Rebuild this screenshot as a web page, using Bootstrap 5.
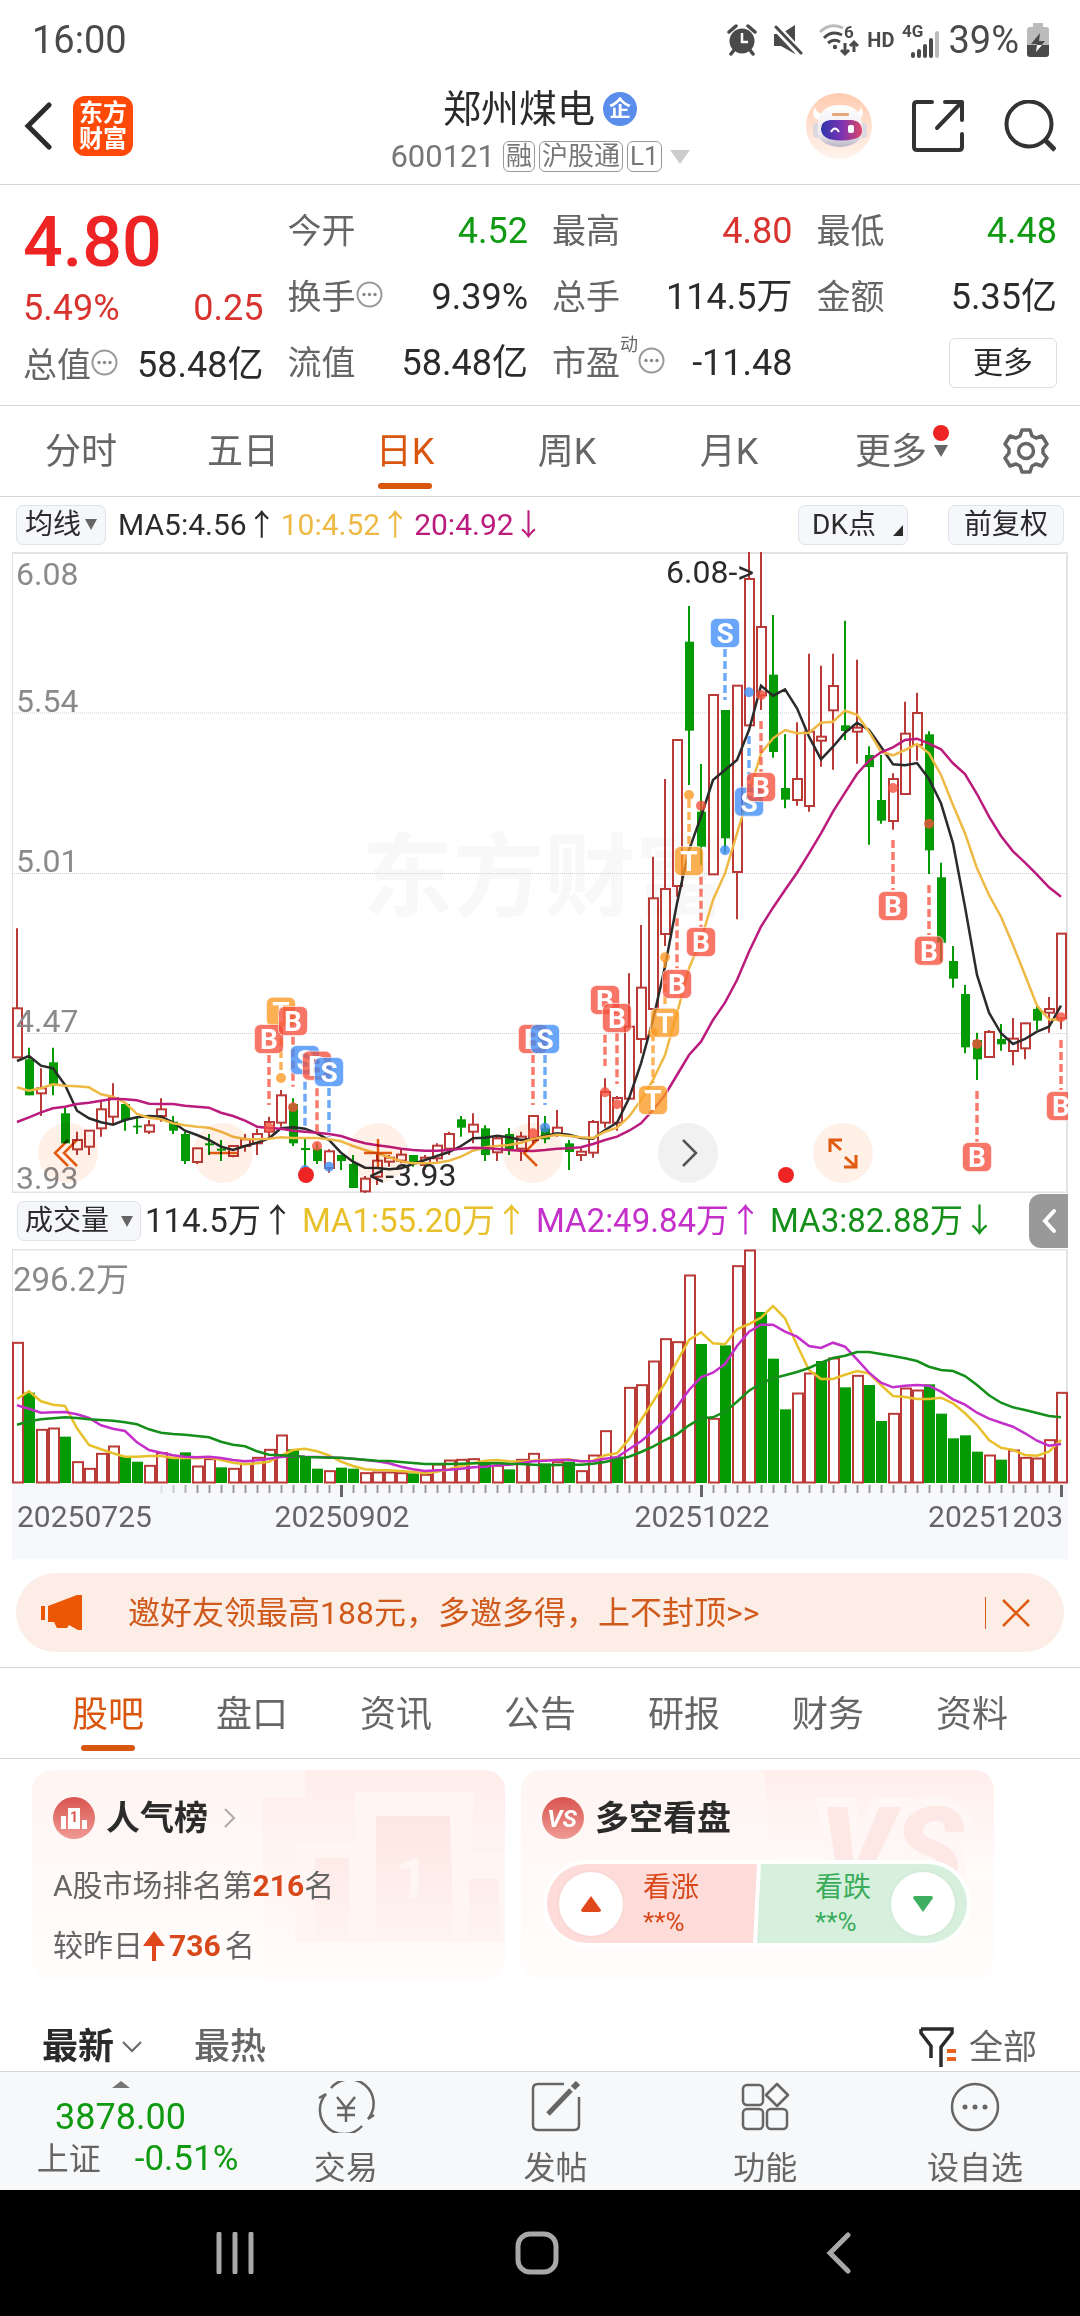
<!DOCTYPE html>
<html lang="zh-CN">
<head>
<meta charset="utf-8">
<meta name="viewport" content="width=device-width, initial-scale=1">
<title>郑州煤电 600121</title>
<link href="https://cdn.jsdelivr.net/npm/bootstrap@5.3.0/dist/css/bootstrap.min.css" rel="stylesheet">
<style>
:root{--ink:#2b2b2b;--soft:#666;--up:#d9332f;--down:#0f9a12;--brand:#d9560f;--rule:#d6d6d8}
body{font-family:Roboto,"Noto Sans CJK SC",sans-serif;color:var(--ink);background:#fff;font-size:36px;line-height:44px}
button,a{color:inherit;text-decoration:none}
button{background:none;border:0;padding:0}
svg{display:block;flex:none}
dl,dd,dt,h1,h2,p{margin:0;font-weight:400}
.ruled{border-bottom:1px solid var(--rule)}
.statusbar{height:80px;padding:0 31px 0 32px;color:#4a4a4a;font-size:38px}
.hd{font-size:20px}
.topbar{height:105px;padding:0 24px}
.topbar .side{flex:1 1 0;padding-bottom:12px}
.topbar .ident{padding-bottom:4px}
.logo{width:60px;height:60px;border-radius:12px;background:#ff4a07;color:#fff;font-size:24px;line-height:26px;font-weight:700;margin-left:21px}
.stock-name{font-size:38px;line-height:44px}
.ent{width:34px;height:34px;border-radius:50%;background:#5b8dea;color:#fff;font-size:22px;line-height:34px;font-weight:700;text-align:center}
.code{font-size:31px;line-height:34px;color:#777;margin-top:9px}
.tagbox{border:1px solid #999;border-radius:6px;font-size:26px;line-height:29px;padding:0 2px;color:#777}
.quote{padding:24px 23px 0;gap:0 24px}
.quote .col-q{flex:1 1 0}
.quote dl{height:66px}
.quote dl:last-child{height:62px}
.quote dt{color:var(--soft);font-size:34px;display:flex;align-items:center;height:44px}
.quote dt svg{margin-bottom:6px}
.quote .last{font-size:70px;line-height:66px;height:66px;font-weight:500;color:#ee2424}
.quote .change{height:68px;line-height:66px}
.quote sup{font-size:18px;line-height:20px;top:-18px}
.up{color:var(--up)}.down{color:var(--down)}
.more-line{height:44px}
.more-btn{border:1px solid #ddd;border-radius:6px;width:108px;height:50px;font-size:30px;line-height:46px}
.tabitem{color:var(--soft);height:90px;line-height:92px;position:relative}
.periods{height:91px}
.tabitem.on{color:var(--brand)}
.tabitem.on::after{content:"";position:absolute;left:50%;bottom:7px;width:54px;height:6px;margin-left:-27px;border-radius:3px;background:var(--brand)}
.tabitem .caret{position:absolute;left:124px;top:39px}
.tabitem .reddot{left:123px;top:19px}
.gear{width:108px}
.tools{height:55px;padding:0 16px;font-size:30px}
.chip{border:1px solid #dfe2e8;border-radius:7px;background:#f5f7fb;height:40px;line-height:36px;font-size:28px}
.avg{color:#eeb945}.mag{color:#ba1b7c}
.plot{padding:0 12px;position:relative}
.plot svg.chart{width:100%;height:auto}
.floaters{position:absolute;left:38px;bottom:10px;gap:95px}
.floaters button{width:60px;height:60px;border-radius:50%;background:#fff0e8;mix-blend-mode:multiply}
.floaters .neutral{background:#f1f1f1}
.reddot{position:absolute;width:16px;height:16px;border-radius:50%;background:#ee2424}
.floaters .reddot{top:44px;left:260px}
.floaters .reddot + .reddot{left:740px}
.volbar{height:56px;padding:0 12px 0 17px;font-size:33px}
.fold{width:39px;height:54px;border-radius:12px 0 0 12px;background:#999}
.promo{margin:14px 16px 15px;height:79px;border-radius:40px;background:#fceee6;color:#d05a1c;font-size:32px;padding:0 34px 0 25px}
.promo .bar{width:1px;height:32px;background:#d05a1c}
.sections{height:92px;padding:0 36px;border-top:1px solid var(--rule)}
.sections .tabitem{line-height:94px}
.cards{padding:11px 86px 0 32px;gap:16px}
.tile{flex:1 1 0;height:210px;border-radius:20px;background:linear-gradient(#fff5f3,#fffdfc);position:relative;overflow:hidden;padding:24px 21px}
.tile .deco{position:absolute;right:0;top:0}
.tile h2{font-size:34px;line-height:48px;font-weight:700;margin-left:11px}
.tile p{font-size:30px;line-height:60px;color:var(--soft);position:relative}
.tile .rank{margin-top:14px}
.tile b{color:#d8481b}
.vote{position:absolute;left:22px;right:23px;top:90px;height:87px;border-radius:44px;border:4px solid #fff;background:#fff;overflow:hidden}
.vote button{flex:1 1 0;font-size:28px;line-height:36px;text-align:left;padding:0 12px}
.vote .bull{background:#fddcda;color:#d8481b;gap:20px;clip-path:polygon(0 0,100% 0,calc(100% - 4px) 100%,0 100%)}
.vote .bear{background:#d6f0dd;color:#3aac5c;gap:20px;clip-path:polygon(4px 0,100% 0,100% 100%,0 100%)}
.vote small{font-size:26px;line-height:32px;display:block}
.vote i{width:64px;height:64px;border-radius:50%;background:#fff;box-shadow:0 0 4px rgba(0,0,0,.06)}
.feed{height:91px;padding:45px 43px 0 42px}
.feed button{height:44px}
.feed .hot{color:#666;margin-left:52px}
.feed .filter{font-size:34px;color:#666}
.dock{height:119px;background:#f6f8fa;border-top:1px solid var(--rule);color:var(--soft);font-size:32px}
.dock .idx{width:241px;line-height:42px;padding:5px 0 0}
.dock .idx .pt{font-size:36px;line-height:42px}
.dock .idx .mkt{gap:34px;padding-left:34px}
.dock .idx .ch{font-size:35px}
.dock .act{flex:1 1 0;line-height:44px;padding-top:9px;gap:13px}
.sysnav{height:126px;background:#000;padding:0 90px 0 84px}
</style>
<script src="https://cdn.jsdelivr.net/npm/bootstrap@5.3.0/dist/js/bootstrap.bundle.min.js"></script>
</head>
<body>
<div class="statusbar d-flex align-items-center justify-content-between">
  <span>16:00</span>
  <div class="d-flex align-items-center">
    <svg width="30" height="32" viewBox="0 0 30 32"><circle cx="15" cy="17" r="12.500" fill="#4a4a4a"/><path d="M2 8 9 2M28 8 21 2M7 26l-3 4M23 26l3 4" stroke="#4a4a4a" stroke-width="3.500" stroke-linecap="round"/><path d="M15 9v9h6" fill="none" stroke="#fff" stroke-width="2.500"/></svg>
    <svg class="ms-3" width="30" height="32" viewBox="0 0 30 32"><path d="M1 10h7L22 1v29L8 22H1z" fill="#4a4a4a"/><path d="M0 0 30 32" stroke="#fff" stroke-width="8"/><path d="M3 3 28 29" stroke="#4a4a4a" stroke-width="3" stroke-linecap="round"/></svg>
    <svg class="ms-3" width="40" height="34" viewBox="0 0 40 34"><g fill="none" stroke="#4a4a4a" stroke-width="3"><path d="M1 9Q11-1 24 5" stroke="#bbb"/><path d="M5 15q8-8 18-3M9 20q6-5 12-1"/><path d="M26 20v11m-4-4 4 4 4-4M35 29V19m-4 4 4-4 4 4"/></g><circle cx="16" cy="24" r="2.200" fill="#4a4a4a"/><text x="25" y="15" font-size="17" font-weight="700" fill="#4a4a4a">6</text></svg>
    <span class="hd fw-bold ms-2">HD</span>
    <svg class="ms-2" width="38" height="38" viewBox="0 0 38 38"><text x="0" y="16" font-size="17" font-weight="700" fill="#4a4a4a">4G</text><path d="M11 35v-2M17 35V30M23 35V25M29 35V19" stroke="#4a4a4a" stroke-width="4" stroke-linecap="round"/><path d="M35 35V12" stroke="#bbb" stroke-width="4" stroke-linecap="round"/></svg>
    <span class="ms-2">39%</span>
    <svg class="ms-2" width="22" height="34" viewBox="0 0 22 34"><path d="M6 0h10v4h3q3 0 3 3v15H0V7q0-3 3-3h3z" fill="#bbb"/><path d="M0 22h22v9q0 3-3 3H3q-3 0-3-3z" fill="#4a4a4a"/><path d="m13 10-9 11h6l-1 8 9-11h-6z" fill="#4a4a4a"/><path d="m10 22-1 7 6-7z" fill="#fff"/></svg>
  </div>
</div>

<header class="topbar ruled d-flex align-items-center">
  <div class="side d-flex align-items-center">
    <button aria-label="返回"><svg width="28" height="48" viewBox="0 0 28 48"><path d="M25 3 4 24l21 21" fill="none" stroke="#2b2b2b" stroke-width="5" stroke-linecap="round"/></svg></button>
    <a href="#" class="logo d-flex flex-column justify-content-center align-items-center"><span>东方</span><span>财富</span></a>
  </div>
  <div class="ident">
    <h1 class="stock-name d-flex align-items-center justify-content-center gap-2">郑州煤电<span class="ent">企</span></h1>
    <div class="code d-flex align-items-center gap-1"><span class="me-1">600121</span><span class="tagbox">融</span><span class="tagbox">沪股通</span><span class="tagbox">L1</span><svg class="ms-1" width="20" height="14" viewBox="0 0 20 14"><path d="M0 0h20L10 14z" fill="#ccc"/></svg></div>
  </div>
  <div class="side d-flex align-items-center justify-content-end">
    <button aria-label="智能助手"><svg width="66" height="66" viewBox="0 0 66 66"><defs><linearGradient id="halo" x2="0" y2="1"><stop stop-color="#ffcbb0"/><stop offset="1" stop-color="#fff4ee"/></linearGradient><linearGradient id="visor"><stop stop-color="#2f35a8"/><stop offset=".5" stop-color="#7a33b4"/><stop offset="1" stop-color="#dc4766"/></linearGradient><linearGradient id="shell" x2="0" y2="1"><stop stop-color="#fff"/><stop offset=".7" stop-color="#ece8ee"/><stop offset="1" stop-color="#b9b4c4"/></linearGradient></defs><circle cx="33" cy="33" r="33" fill="url(#halo)"/><path d="M9 14q-5 9 3 13l6-6q-8 0-9-7zM55 14q5 9-3 13l-6-6q8 0 9-7z" fill="#fff"/><rect x="7" y="30" width="8" height="15" rx="4" fill="#dcd8e0"/><rect x="53" y="30" width="8" height="15" rx="4" fill="#dcd8e0"/><path d="M12 34Q12 12 34 12t22 22q2 8-3 13-7 7-19 7t-19-7q-5-5-3-13z" fill="url(#shell)"/><path d="M15 36q0-8 9-9h22q9 1 10 9t-8 10q-12 3-25 0-8-3-8-10z" fill="url(#visor)"/><path d="M25 39q4-7 8 0" fill="none" stroke="#fff" stroke-width="2"/><rect x="42" y="32" width="6" height="8" rx="2" fill="#fff"/><rect x="26" y="20" width="17" height="3" rx="1" fill="#e8a878"/></svg></button>
    <button class="ms-4 ps-3" aria-label="分享"><svg width="52" height="52" viewBox="0 0 52 52" fill="none" stroke="#333" stroke-width="4" stroke-linecap="round" stroke-linejoin="round"><path d="M20 2H5Q2 2 2 5v42q0 3 3 3h42q3 0 3-3V34M25 28 48 4M33 2h17v18"/></svg></button>
    <button class="ms-4 ps-3" aria-label="搜索"><svg width="52" height="52" viewBox="0 0 52 52" fill="none" stroke="#333" stroke-width="4"><circle cx="25" cy="24" r="22.500"/><path d="m41 40 10 10" stroke-width="5"/></svg></button>
  </div>
</header>

<section class="quote ruled d-flex">
  <div class="col-q">
    <div class="last">4.80</div>
    <div class="change d-flex justify-content-between up"><span>5.49%</span><span>0.25</span></div>
    <dl class="d-flex justify-content-between"><dt>总值<svg width="27" height="27" viewBox="0 0 27 27"><use href="#dots"/></svg></dt><dd>58.48亿</dd></dl>
  </div>
  <div class="col-q">
    <dl class="d-flex justify-content-between"><dt>今开</dt><dd class="down">4.52</dd></dl>
    <dl class="d-flex justify-content-between"><dt>换手<svg width="27" height="27" viewBox="0 0 27 27"><use href="#dots"/></svg></dt><dd>9.39%</dd></dl>
    <dl class="d-flex justify-content-between"><dt>流值</dt><dd>58.48亿</dd></dl>
  </div>
  <div class="col-q">
    <dl class="d-flex justify-content-between"><dt>最高</dt><dd class="up">4.80</dd></dl>
    <dl class="d-flex justify-content-between"><dt>总手</dt><dd>114.5万</dd></dl>
    <dl class="d-flex justify-content-between"><dt>市盈<sup>动</sup><svg width="27" height="27" viewBox="0 0 27 27"><use href="#dots"/></svg></dt><dd>-11.48</dd></dl>
  </div>
  <div class="col-q">
    <dl class="d-flex justify-content-between"><dt>最低</dt><dd class="down">4.48</dd></dl>
    <dl class="d-flex justify-content-between"><dt>金额</dt><dd>5.35亿</dd></dl>
    <div class="more-line d-flex justify-content-end align-items-center"><button class="more-btn">更多</button></div>
  </div>
</section>
<svg width="0" height="0" class="position-absolute"><defs><g id="dots"><circle cx="13.500" cy="13.500" r="12" fill="none" stroke="#999" stroke-width="2"/><g fill="#888"><circle cx="8" cy="13.500" r="1.700"/><circle cx="13.500" cy="13.500" r="1.700"/><circle cx="19" cy="13.500" r="1.700"/></g></g></defs></svg>

<nav class="periods ruled d-flex text-center">
  <a href="#" class="tabitem flex-fill w-100">分时</a>
  <a href="#" class="tabitem flex-fill w-100">五日</a>
  <a href="#" class="tabitem flex-fill w-100 on">日K</a>
  <a href="#" class="tabitem flex-fill w-100">周K</a>
  <a href="#" class="tabitem flex-fill w-100">月K</a>
  <a href="#" class="tabitem flex-fill w-100">更多<span class="reddot"></span><svg class="caret" width="14" height="12" viewBox="0 0 14 12"><path d="M0 0h14L7 12z" fill="#666"/></svg></a>
  <button class="gear flex-shrink-0 d-flex align-items-center justify-content-center" aria-label="设置"><svg width="46" height="46" viewBox="0 0 46 46" fill="none" stroke="#666" stroke-width="3.500" stroke-linejoin="round"><path d="M19 2h8l2 6 4 2 6-2 5 8-4 5v4l4 5-5 8-6-2-4 2-2 6h-8l-2-6-4-2-6 2-5-8 4-5v-4l-4-5 5-8 6 2 4-2z"/><circle cx="23" cy="23" r="7.500"/></svg></button>
</nav>

<div class="tools d-flex align-items-center">
  <button class="chip d-flex align-items-center justify-content-center" style="width:90px">均线<svg class="ms-1" width="12" height="11" viewBox="0 0 12 11"><path d="M0 0h12L6 11z" fill="#666"/></svg></button>
  <span class="ms-2 ps-1">MA5:4.56↑</span><span class="avg ms-1">10:4.52↑</span><span class="mag ms-1">20:4.92↓</span>
  <button class="chip ms-auto d-flex align-items-center justify-content-between" style="width:110px;padding:0 4px 0 13px">DK点<svg class="align-self-end mb-2" width="10" height="11" viewBox="0 0 10 11"><path d="M10 0v11H0z" fill="#2b2b2b"/></svg></button>
  <button class="chip" style="width:116px;margin-left:40px">前复权</button>
</div>

<div class="plot">
  <svg class="chart" id="price" viewBox="0 0 1056 641">
    <text x="350" y="357" font-size="91" font-weight="700" fill="#f8f8f8">东方财富</text>
    <g fill="none" stroke="#e3e3e5"><path d="M.5 0V641" /><path d="M0 1h1056M0 640.500h1056M1055 0V641" stroke-width="2"/><path d="M0 161h1056M0 321.500h1056M0 481.500h1056" stroke="#cfcfcf" stroke-dasharray="1 1"/></g>
    <g id="marks"></g>
    <g font-size="32" fill="#8a8a8a"><text x="4" y="33">6.08</text><text x="4" y="160">5.54</text><text x="4" y="320">5.01</text><text x="4" y="480">4.47</text><text x="4" y="637">3.93</text></g>
    <g font-size="32" fill="#2b2b2b"><text x="654" y="31">6.08-&gt;</text><text x="357" y="634">&lt;-3.93</text></g>
  </svg>
  <div class="floaters d-flex">
    <button aria-label="快退"><svg width="60" height="60" viewBox="0 0 60 60" fill="none" stroke="#e05a10" stroke-width="2.500"><path d="M30 17 17 30l13 13M39 17 26 30l13 13"/></svg></button>
    <button aria-label="缩小"><svg width="60" height="60" viewBox="0 0 60 60"><path d="M16 30h28" stroke="#e05a10" stroke-width="2.500"/></svg></button>
    <button aria-label="放大"><svg width="60" height="60" viewBox="0 0 60 60"><path d="M16 30h28M30 16v28" stroke="#e05a10" stroke-width="2.500"/></svg></button>
    <button aria-label="左移"><svg width="60" height="60" viewBox="0 0 60 60"><path d="M34 17 21 30l13 13" fill="none" stroke="#e05a10" stroke-width="2.500"/></svg></button>
    <button class="neutral" aria-label="右移"><svg width="60" height="60" viewBox="0 0 60 60"><path d="m25 17 13 13-13 13" fill="none" stroke="#555" stroke-width="2.500"/></svg></button>
    <button aria-label="全屏"><svg width="60" height="60" viewBox="0 0 60 60" fill="none" stroke="#e05a10" stroke-width="3"><path d="M17 29V17h12M18 18l10 9M43 32v12H31M42 43 32 34"/></svg></button>
    <span class="reddot"></span>
    <span class="reddot"></span>
  </div>
</div>

<div class="volbar d-flex align-items-center">
  <button class="chip d-flex align-items-center justify-content-center" style="width:124px">成交量<svg class="ms-2 ps-1" width="16" height="11" viewBox="0 0 12 11"><path d="M0 0h12L6 11z" fill="#666"/></svg></button>
  <span class="ms-1">114.5万↑</span>
  <span class="ms-2" style="color:#e8c02c">MA1:55.20万↑</span>
  <span class="ms-2" style="color:#c42fca">MA2:49.84万↑</span>
  <span class="ms-2" style="color:#14901a">MA3:82.88万↓</span>
  <button class="fold ms-auto d-flex align-items-center justify-content-center" aria-label="收起"><svg width="16" height="26" viewBox="0 0 16 26"><path d="M13 3 4 13l9 10" fill="none" stroke="#fff" stroke-width="4" stroke-linecap="round"/></svg></button>
</div>
<div class="plot">
  <svg class="chart" id="volume" viewBox="0 0 1056 310">
    <rect y="235" width="1056" height="75" fill="#f7f8fb"/>
    <g fill="none" stroke="#e3e3e5"><path d="M.5 0V234"/><path d="M0 .5h1056M1055 0V234" stroke-width="2"/></g>
    <g id="bars"></g>
    <text x="1" y="42" font-size="33" fill="#8a8a8a">296.2万</text>
    <g font-size="30" fill="#666"><text x="5" y="278">20250725</text><text x="330" y="278" text-anchor="middle">20250902</text><text x="690" y="278" text-anchor="middle">20251022</text><text x="1051" y="278" text-anchor="end">20251203</text></g>
  </svg>
</div>

<div class="promo d-flex align-items-center">
  <svg width="42" height="36" viewBox="0 0 42 36"><path d="M0 11h4v14H0zM7 11 36 0h5v35h-4l-9-5-2 3H16l-3-6H7z" fill="#ec5706"/></svg>
  <a href="#" style="margin-left:45px">邀好友领最高188元，多邀多得，上不封顶&gt;&gt;</a>
  <span class="bar ms-auto"></span>
  <button class="ms-3" aria-label="关闭"><svg width="28" height="28" viewBox="0 0 28 28"><path d="m1 1 26 26M27 1 1 27" stroke="#e05a10" stroke-width="2.500"/></svg></button>
</div>

<nav class="sections ruled d-flex text-center">
  <a href="#" class="tabitem flex-fill w-100 on">股吧</a><a href="#" class="tabitem flex-fill w-100">盘口</a><a href="#" class="tabitem flex-fill w-100">资讯</a><a href="#" class="tabitem flex-fill w-100">公告</a><a href="#" class="tabitem flex-fill w-100">研报</a><a href="#" class="tabitem flex-fill w-100">财务</a><a href="#" class="tabitem flex-fill w-100">资料</a>
</nav>

<div class="cards d-flex">
  <section class="tile">
    <svg class="deco" width="245" height="210" viewBox="0 0 245 210"><defs><linearGradient id="fade" x2="0" y2="1"><stop stop-color="#fbdcd8"/><stop offset="1" stop-color="#fff3f0"/></linearGradient><linearGradient id="veil" x2="0" y2="1"><stop stop-color="#ffeeeb"/><stop offset="1" stop-color="#fffcfb"/></linearGradient></defs><path d="M45 0h200v210H3V28h42z" fill="url(#veil)"/><path d="M35 72h60V22h118v60h32v90H35z" fill="#fff6f4"/><path d="M55 88h34v84H55zM116 46h74l4 126h-78zM209 109h29l4 63h-33z" fill="url(#fade)" opacity=".6"/><text x="136" y="128" font-size="56" font-weight="700" fill="#fff6f4">1</text></svg>
    <div class="d-flex align-items-center position-relative">
      <svg width="42" height="42" viewBox="0 0 42 42"><defs><linearGradient id="disc" x2="0" y2="1"><stop stop-color="#d9544f"/><stop offset="1" stop-color="#ef9a95"/></linearGradient></defs><circle cx="21" cy="21" r="21" fill="url(#disc)"/><path d="M8 19h5v13H8zM15 11h12v21H15zM29 23h5v9h-5z" fill="#fff"/><text x="17" y="25" font-size="14" font-weight="700" fill="#d9544f">1</text></svg>
      <h2>人气榜</h2>
      <svg class="ms-3" width="12" height="20" viewBox="0 0 12 20"><path d="m1 1 9 9-9 9" fill="none" stroke="#aaa" stroke-width="2"/></svg>
    </div>
    <p class="rank">A股市场排名第<b>216</b>名</p>
    <p class="d-flex align-items-center">较昨日<svg width="22" height="30" viewBox="0 0 22 30"><path d="M11 0 22 15h-9v15H9V15H0z" fill="#e0481b"/></svg><b class="mx-1">736</b> 名</p>
  </section>
  <section class="tile">
    <svg class="deco" width="230" height="210" viewBox="0 0 230 210"><path d="M0 0h230v110H10z" fill="url(#veil)"/><text x="55" y="120" font-size="116" font-weight="900" font-style="italic" fill="#fde8e5" stroke="#fff7f5" stroke-width="18" paint-order="stroke">VS</text></svg>
    <div class="d-flex align-items-center position-relative">
      <svg width="42" height="42" viewBox="0 0 42 42"><circle cx="21" cy="21" r="21" fill="url(#disc)"/><text x="20" y="30" font-size="24" font-weight="700" font-style="italic" text-anchor="middle" fill="#fff">VS</text></svg>
      <h2>多空看盘</h2>
    </div>
    <div class="vote d-flex">
      <button class="bull d-flex align-items-center"><i class="d-flex align-items-center justify-content-center"><svg width="20" height="16" viewBox="0 0 20 16"><path d="M10 0 20 14q0 2-2 2H2q-2 0-2-2z" fill="#e0481b"/></svg></i><span>看涨<small>**%</small></span></button>
      <button class="bear d-flex align-items-center justify-content-end"><span>看跌<small>**%</small></span><i class="d-flex align-items-center justify-content-center"><svg width="20" height="16" viewBox="0 0 20 16"><path d="M10 16 20 2q0-2-2-2H2Q0 0 0 2z" fill="#3fae60"/></svg></i></button>
    </div>
  </section>
</div>

<div class="feed d-flex align-items-start">
  <button class="fw-bold d-flex align-items-center">最新<svg class="ms-2" width="20" height="12" viewBox="0 0 20 12"><path d="m1 1 9 9 9-9" fill="none" stroke="#666" stroke-width="2"/></svg></button>
  <button class="hot fw-medium">最热</button>
  <button class="filter ms-auto d-flex align-items-center"><svg class="me-2 pe-1" width="42" height="40" viewBox="0 0 38 40"><path d="M2 2h31v4L22 20v20M2 2v4l10 13v12" fill="none" stroke="#2b2b2b" stroke-width="3.500"/><path d="M28 24h9M28 32h9" stroke="#e8621c" stroke-width="4"/></svg>全部</button>
</div>

<nav class="dock d-flex text-center">
  <a href="#" class="idx d-flex flex-column align-items-center"><svg width="18" height="7" viewBox="0 0 18 7" class="mt-1"><path d="M9 0l9 7H0z" fill="#777"/></svg><span class="pt down mt-2">3878.00</span><span class="mkt d-flex"><span>上证</span><span class="ch down">-0.51%</span></span></a>
  <a href="#" class="act d-flex flex-column align-items-center"><svg width="58" height="52" viewBox="0 0 58 52" fill="none" stroke="#666" stroke-width="2.500"><path d="M14 7a24 24 0 0 1 37 31l6-4M45 45A24 24 0 0 1 9 13L2 17"/><path d="m20 16 9 11 9-11M29 27v14M20 27h18M20 34h18"/></svg>交易</a>
  <a href="#" class="act d-flex flex-column align-items-center"><svg width="52" height="52" viewBox="0 0 52 52" fill="none" stroke="#666" stroke-width="2.500"><path d="M34 3H8Q3 3 3 8v36q0 5 5 5h36q5 0 5-5V16"/><path d="M18 33 41 9" stroke-width="5"/><path d="m43 7 5-5" stroke-width="6"/></svg>发帖</a>
  <a href="#" class="act d-flex flex-column align-items-center"><svg width="52" height="52" viewBox="0 0 52 52" fill="none" stroke="#666" stroke-width="2.500"><rect x="4" y="4" width="20" height="20" rx="4"/><rect x="4" y="28" width="20" height="20" rx="4"/><rect x="28" y="28" width="20" height="20" rx="4"/><path d="m38 3 11 11-11 11-11-11z" stroke-linejoin="round"/></svg>功能</a>
  <a href="#" class="act d-flex flex-column align-items-center"><svg width="52" height="52" viewBox="0 0 52 52"><circle cx="26" cy="26" r="23" fill="none" stroke="#666" stroke-width="2.500"/><g fill="#666"><circle cx="16" cy="26" r="2.500"/><circle cx="26" cy="26" r="2.500"/><circle cx="36" cy="26" r="2.500"/></g></svg>设自选</a>
</nav>
<div class="sysnav d-flex align-items-center">
  <button class="flex-fill w-100" aria-label="最近任务"><svg class="mx-auto" width="38" height="42" viewBox="0 0 38 42"><path d="M3 2v38M19 2v38M35 2v38" stroke="#a8a8a8" stroke-width="5" stroke-linecap="round"/></svg></button>
  <button class="flex-fill w-100" aria-label="主页"><svg class="mx-auto" width="44" height="44" viewBox="0 0 44 44"><rect x="3" y="3" width="38" height="38" rx="12" fill="none" stroke="#a8a8a8" stroke-width="5"/></svg></button>
  <button class="flex-fill w-100" aria-label="返回"><svg class="mx-auto" width="26" height="42" viewBox="0 0 26 42"><path d="M22 3 4 21l18 18" fill="none" stroke="#a8a8a8" stroke-width="5" stroke-linecap="round"/></svg></button>
</div>

<script>
// Each candle: colour, high, body top, body bottom, low (three units per pixel)
const candles = `r205,445,592,592 g563,598,706,706 r625,685,700,768 g563,607,676,706 g738,760,850,850 r815,840,868,885 r812,812,860,885 r722,748,805,830 r670,714,770,795 g732,732,780,812 g768,797,802,822 r780,796,815,822 r715,748,768,785 g768,785,812,822 g815,822,903,912 r865,865,906,912 g822,850,856,885 g840,866,872,903 r855,858,888,892 r822,838,858,875 r806,822,850,885 r770,786,815,830 r690,706,788,800 g715,732,850,858 g836,864,870,930 g850,866,903,912 r868,874,924,938 g885,885,903,930 g885,912,984,984 r948,956,994,1000 r880,902,950,975 r885,893,905,920 r866,884,902,910 g885,885,908,920 r885,893,915,930 r850,857,895,905 r815,822,866,885 g768,778,803,830 r760,794,815,850 g796,805,885,903 r826,835,877,903 g804,822,868,885 r815,830,866,903 r768,768,840,850 g768,805,838,850 r750,803,822,830 g840,850,876,930 r865,875,885,903 r780,786,878,893 r655,696,788,803 r708,714,788,812 r340,500,716,716 r195,383,537,580 r-10,115,447,447 r-243,87,222,258 r-360,-360,78,110 g-762,-655,-388,-225 g-288,-145,-40,15 r-495,-495,43,43 g-450,-450,-65,-20 r-523,-523,36,178 r-924,-843,-404,-404 r-924,-699,-494,-450 g-735,-556,-324,-307 g-377,-216,-181,-155 r-413,-243,-180,-163 r-619,-385,-162,-145 r-583,-370,-358,-280 r-619,-522,-449,-271 g-718,-404,-387,-360 r-601,-397,-385,-289 g-341,-315,-279,-46 g-315,-180,-118,-109 r-260,-243,-117,-91 r-475,-379,-198,-198 r-502,-441,-345,-298 g-386,-377,-29,42 g8,52,248,305 g258,303,356,383 g375,402,562,580 g518,540,598,660 r510,516,591,591 g492,537,553,572 r474,536,573,616 r488,490,565,598 g438,447,482,510 r411,447,458,518 r221,221,475,508`.split(' ');
const ma = {
 '#2b2b2b':[603,588,617,625,675,752,775,787,794,780,772,768,770,787,812,825,840,860,870,858,848,835,805,802,806,820,840,878,905,923,924,928,925,912,900,888,876,858,835,833,827,832,840,836,828,820,824,834,836,810,788,715,610,480,320,130,-30,-130,-240,-270,-300,-390,-523,-493,-512,-455,-370,-302,-340,-382,-412,-390,-340,-287,-284,-291,-243,-170,-50,140,345,458,520,552,537,515,500,437],
 '#eeb945':[682,692,685,673,677,679,682,703,710,728,762,773,778,790,796,800,803,815,830,837,838,836,832,834,834,834,838,844,858,870,880,892,904,910,910,908,902,890,872,862,858,855,848,836,830,824,828,832,834,815,803,770,720,660,585,460,325,240,120,40,-80,-200,-320,-365,-390,-380,-382,-412,-415,-448,-436,-385,-325,-314,-330,-348,-320,-255,-165,-80,25,105,170,255,345,437,478,480],
 '#ba1b7c':[786,772,757,745,740,732,728,722,716,718,721,731,732,732,737,740,743,758,768,782,800,804,806,812,815,818,822,828,840,850,856,860,866,870,872,872,870,866,863,864,867,870,872,873,870,866,865,862,852,840,830,812,790,750,705,645,585,545,480,428,360,275,200,143,90,38,-20,-80,-145,-202,-258,-298,-323,-338,-360,-364,-349,-332,-290,-258,-198,-130,-72,-26,8,44,82,110]};
// Trade marks: candle index, letter, tag centre, dash start, dash end, dot
const trades = [[22,'T',455,498,640,654],[21,'B',537,585,735,803],[23,'B',483,530,680,742],[24,'S',600,665,800,930],[25,'B',617,685,815,858],[26,'S',636,684,830,920],[43,'B',537,585,735,820],[44,'S',537,585,735,803],[49,'B',420,524,618,697],[50,'B',474,520,672,733],[53,'T',720,520,670,518],[54,'T',488,300,445,292],[55,'B',372,175,325,null],[56,'T',3,-180,-45,-195],[57,'B',246,50,200,-163],[59,'S',-681,-633,-480,-29],[61,'S',-175,-372,-220,-503],[62,'B',-219,-417,-265,-495],[73,'B',138,-60,90,-216],[76,'B',272,75,225,-109],[80,'B',891,693,845,552],[87,'B',738,540,690,472]];
const volumes = 'r457 g608 r718 r714 g740 r815 r835 r790 r768 g800 g815 r826 r788 g803 g787 r828 r806 g832 r835 r820 r802 r778 r735 g778 g798 g836 r842 g833 g836 r848 r846 r846 r848 g850 r853 r822 r810 r808 r806 g822 r826 g838 r808 r790 g820 r815 g815 r842 r795 r722 g800 r592 r584 r513 r446 r455 r255 g462 r685 g466 r227 r180 g366 g506 g658 r609 r549 g513 r504 g592 r556 g585 g693 r670 r594 r600 g583 g671 g745 g736 g785 r795 g809 r780 r802 r804 r749 r607'.split(' ');
const volMa = {
 '#e8c02c':[627,604,634,644,648,715,765,778,790,800,800,798,798,804,803,805,802,810,818,823,820,815,797,780,776,784,796,815,828,838,840,841,843,846,850,845,838,828,820,812,810,814,815,812,810,810,808,814,812,796,790,748,690,635,580,515,450,427,460,463,418,402,383,348,385,465,540,567,567,554,543,550,585,618,621,627,627,623,640,670,705,750,773,780,795,797,785,750],
 '#c42fca':[646,656,668,667,666,673,684,706,716,723,757,780,788,796,800,802,800,804,810,814,811,806,801,798,800,801,802,804,806,810,814,820,830,838,843,841,839,836,832,830,826,824,820,814,812,810,810,814,814,806,802,778,754,724,690,650,600,562,548,522,468,425,404,404,425,440,468,474,458,470,508,548,578,592,587,585,587,605,628,644,668,686,698,710,730,752,767,762],
 '#14901a':[704,694,688,685,682,684,688,690,692,697,703,718,728,732,734,738,742,755,764,769,784,794,796,798,801,802,803,803,806,809,812,813,816,819,822,822,822,821,820,820,819,821,822,824,826,825,824,824,821,816,808,800,786,770,750,733,706,685,682,665,635,602,580,565,556,546,534,518,504,497,486,486,492,498,505,513,530,540,543,558,585,616,638,652,660,669,678,682]};
const X = i => 5 + 12 * i, Y = v => 308 + v / 3, V = v => v / 3 - 59;
const RED = '#b93a36', GREEN = '#039a03';
const line = (data, color, f) => `<polyline fill="none" stroke="${color}" stroke-width="2.500" points="${data.map((v, i) => X(i) + ',' + f(v).toFixed(1)).join(' ')}"/>`;
let s = '';
candles.forEach((c, i) => {
  const [h, t, b, l] = c.slice(1).split(',').map(v => Y(+v)), x = X(i);
  if (c[0] === 'g') s += `<path d="M${x} ${h}V${l}" stroke="${GREEN}" stroke-width="2"/><rect x="${x - 4}" y="${t}" width="9" height="${b - t}" fill="${GREEN}"/>`;
  else s += `<path d="M${x} ${h}V${t}M${x} ${b}V${l}" stroke="${RED}" stroke-width="2"/><rect x="${x - 4}" y="${t}" width="9" height="${Math.max(b - t, 2)}" fill="#fff" fill-opacity=".6" stroke="${RED}" stroke-width="2"/>`;
});
for (const k in ma) s += line(ma[k], k, Y);
const tint = {B: '#f5503c', S: '#3f8df7', T: '#fb9a24'};
trades.forEach(([i, k, c, a, b, d]) => {
  const x = X(i), y = Y(c);
  s += `<path d="M${x} ${Y(a)}V${Y(b)}" stroke="${tint[k]}" stroke-opacity=".75" stroke-width="3.500" stroke-dasharray="8 4"/>`;
  if (d !== null) s += `<circle cx="${x}" cy="${Y(d)}" r="5" fill="${tint[k]}" fill-opacity=".8"/>`;
  s += `<rect x="${x - 14.500}" y="${y - 14.500}" width="29" height="29" rx="6" fill="${tint[k]}" fill-opacity=".78" stroke="#fff" stroke-opacity=".6"/><text x="${x}" y="${y + 10}" font-size="28" font-weight="700" text-anchor="middle" fill="#fff">${k}</text>`;
});
document.getElementById('marks').innerHTML = s;
s = '';
volumes.forEach((c, i) => {
  const y = V(+c.slice(1)), x = X(i);
  s += c[0] === 'g' ? `<rect x="${x - 5}" y="${y}" width="11" height="${234 - y}" fill="${GREEN}"/>`
    : `<rect x="${x - 4}" y="${y + .5}" width="10" height="${233 - y}" fill="#fff" stroke="${RED}" stroke-width="2"/>`;
  if (i > 11) { const big = i % 30 === 27; s += `<path d="M${x + .5} 236v${big ? 12 : 8}" stroke="${big ? '#666' : '#999'}" stroke-width="${big ? 3 : 2}" opacity="${Math.min(1, (i - 11) / 4)}"/>`; }
});
for (const k in volMa) s += line(volMa[k], k, V);
document.getElementById('bars').innerHTML = s;
</script>
</body>
</html>
